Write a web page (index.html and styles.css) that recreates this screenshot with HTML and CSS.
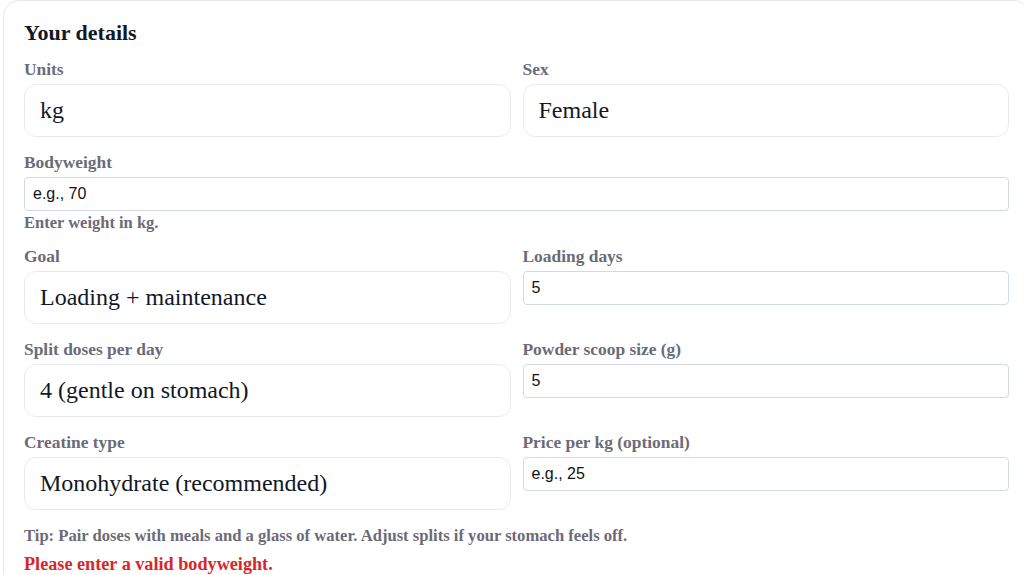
FILE: index.html
```html
<!DOCTYPE html>
<html lang="en">
<head>
<meta charset="utf-8">
<title>Your details</title>
<link rel="stylesheet" href="styles.css">
</head>
<body>
<section class="card">
  <h2 class="title">Your details</h2>
  <div class="grid">
    <div class="field">
      <div class="label">Units</div>
      <div class="select">kg</div>
    </div>
    <div class="field">
      <div class="label">Sex</div>
      <div class="select">Female</div>
    </div>
    <div class="field full">
      <div class="label">Bodyweight</div>
      <input class="input" type="text" placeholder="e.g., 70">
      <div class="hint">Enter weight in kg.</div>
    </div>
    <div class="field">
      <div class="label">Goal</div>
      <div class="select">Loading + maintenance</div>
    </div>
    <div class="field">
      <div class="label">Loading days</div>
      <input class="input" type="text" value="5">
    </div>
    <div class="field">
      <div class="label">Split doses per day</div>
      <div class="select">4 (gentle on stomach)</div>
    </div>
    <div class="field">
      <div class="label">Powder scoop size (g)</div>
      <input class="input" type="text" value="5">
    </div>
    <div class="field">
      <div class="label">Creatine type</div>
      <div class="select">Monohydrate (recommended)</div>
    </div>
    <div class="field">
      <div class="label">Price per kg (optional)</div>
      <input class="input" type="text" placeholder="e.g., 25">
    </div>
  </div>
  <p class="tip">Tip: Pair doses with meals and a glass of water. Adjust splits if your stomach feels off.</p>
  <p class="error">Please enter a valid bodyweight.</p>
</section>
</body>
</html>
```
FILE: styles.css
```css
html, body {
  margin: 0;
  padding: 0;
  background: #ffffff;
}
body {
  font-family: "Liberation Serif", "Times New Roman", serif;
  color: #111827;
  overflow: hidden;
}
.card {
  margin-left: 3px;
  border: 1px solid #e5e7eb;
  border-radius: 16px;
  padding: 20px 20px 40px 20px;
  box-sizing: content-box;
  width: 985px;
}
.title {
  margin: 0 0 15px 0;
  font-size: 22px;
  line-height: 24px;
  font-weight: 700;
  color: #111827;
}
.grid {
  display: grid;
  grid-template-columns: 1fr 1fr;
  column-gap: 12px;
  row-gap: 16px;
}
.field {
  display: flex;
  flex-direction: column;
  min-width: 0;
}
.full {
  grid-column: 1 / -1;
}
.label {
  font-size: 17.4px;
  line-height: 18px;
  font-weight: 700;
  color: #6b6b78;
  margin-bottom: 6px;
}
.select {
  display: flex;
  align-items: center;
  height: 53px;
  border: 1px solid #e8eaee;
  border-radius: 12px;
  background: #ffffff;
  padding: 0 15px;
  font-size: 24px;
  color: #111827;
  box-sizing: border-box;
}
.input {
  height: 34px;
  border: 1px solid #d3d9e2;
  border-radius: 4px;
  background: #ffffff;
  padding: 0 8px;
  font-family: "Liberation Sans", Arial, sans-serif;
  font-size: 16px;
  color: #111111;
  box-sizing: border-box;
  width: 100%;
}
.input::placeholder {
  color: #111111;
  opacity: 1;
}
.hint {
  margin-top: 3px;
  font-size: 16.5px;
  line-height: 17px;
  font-weight: 700;
  color: #6b6b78;
}
.tip {
  margin: 17px 0 0 0;
  font-size: 16.6px;
  line-height: 18px;
  font-weight: 700;
  color: #6b6b78;
}
.error {
  margin: 8px 0 0 0;
  font-size: 18.2px;
  line-height: 22px;
  font-weight: 700;
  color: #dc2626;
}
```
